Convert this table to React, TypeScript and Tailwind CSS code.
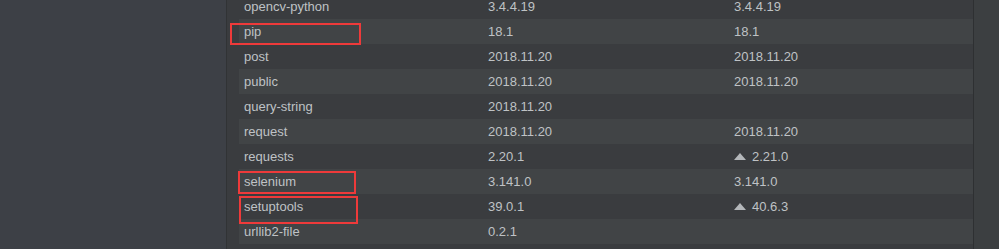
import React from "react";

type Row = { name: string; v1: string; v2: string; up?: boolean };

const rows: Row[] = [
  { name: "opencv-python", v1: "3.4.4.19", v2: "3.4.4.19" },
  { name: "pip", v1: "18.1", v2: "18.1" },
  { name: "post", v1: "2018.11.20", v2: "2018.11.20" },
  { name: "public", v1: "2018.11.20", v2: "2018.11.20" },
  { name: "query-string", v1: "2018.11.20", v2: "" },
  { name: "request", v1: "2018.11.20", v2: "2018.11.20" },
  { name: "requests", v1: "2.20.1", v2: "2.21.0", up: true },
  { name: "selenium", v1: "3.141.0", v2: "3.141.0" },
  { name: "setuptools", v1: "39.0.1", v2: "40.6.3", up: true },
  { name: "urllib2-file", v1: "0.2.1", v2: "" },
  { name: "", v1: "", v2: "" },
];

function Up() {
  return (
    <svg width="12" height="7" viewBox="0 0 12 7" className="mr-[6px] shrink-0">
      <polygon points="6,0 12,7 0,7" fill="#b4b7ba" />
    </svg>
  );
}

export default function App() {
  return (
    <div
      className="w-[999px] h-[249px] overflow-hidden flex bg-[#3c3f41] text-[13px] text-[#bfc2c5]"
      style={{ fontFamily: '"Liberation Sans", Arial, sans-serif' }}
    >
      <div className="w-[226px] shrink-0 bg-[#3d4046]" />
      <div className="w-[1px] shrink-0 bg-[#313335]" />
      <div className="w-[12px] shrink-0 bg-[#3a3c3f]" />
      <div className="relative w-[734px] shrink-0">
        <div className="flex flex-col mt-[-6px]">
          {rows.map((r, i) => (
            <div
              key={i}
              className={
                "flex h-[25px] items-center " +
                (i % 2 === 1 ? "bg-[#414446]" : "bg-[#3a3c3f]")
              }
            >
              <div className="w-[244px] pl-[5px] whitespace-nowrap">{r.name}</div>
              <div className="w-[245px] pl-[5px] whitespace-nowrap">{r.v1}</div>
              <div className="flex-1 pl-[6px] flex items-center whitespace-nowrap">
                {r.up && <Up />}
                {r.v2}
              </div>
            </div>
          ))}
        </div>
        <div className="absolute left-[-9px] top-[23px] w-[131px] h-[22px] border-2 border-[#ee3a3a]" />
        <div className="absolute left-[-1px] top-[171px] w-[118px] h-[23px] border-2 border-[#ee3a3a]" />
        <div className="absolute left-[0px] top-[196px] w-[119px] h-[28px] border-2 border-[#ee3a3a]" />
      </div>
      <div className="w-[1px] shrink-0 bg-[#2e3032]" />
      <div className="flex-1 bg-[#3c3f41]" />
    </div>
  );
}
